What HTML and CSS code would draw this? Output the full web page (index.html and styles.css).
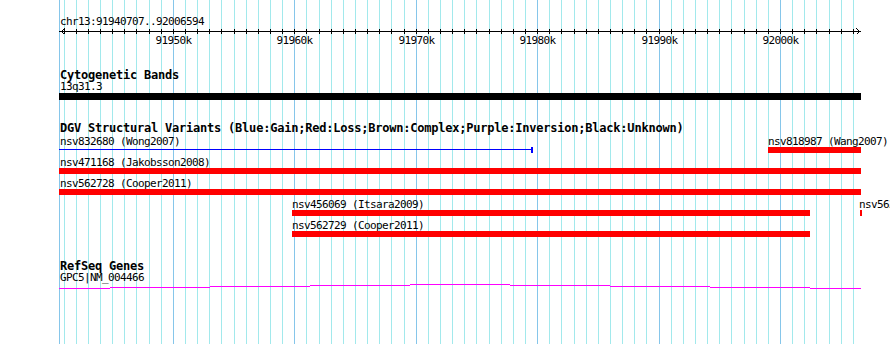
FILE: index.html
```html
<!DOCTYPE html>
<html lang="en">
<head>
  <meta charset="UTF-8">
  <meta name="viewport" content="width=device-width, initial-scale=1.0">
  <title>chr13:91940707..92006594</title>
  <link rel="stylesheet" href="styles.css">
</head>
<body>
  <div class="panel">
    <svg id="tracks" width="890" height="344" viewBox="0 0 890 344">
      <g id="grid"></g>

      <!-- ruler -->
      <g id="ruler">
        <text class="label" x="60" y="25">chr13:91940707..92006594</text>
        <rect class="ink" x="59" y="31" width="802" height="1"/>
        <polyline class="arrow" points="64.5,28.5 61.5,31.5 64.5,34.5"/>
        <polyline class="arrow" points="856.5,28.5 859.5,31.5 856.5,34.5"/>
        <g id="ticks"></g>
      </g>

      <!-- cytogenetic bands -->
      <g>
        <text class="title" x="60" y="79">Cytogenetic Bands</text>
        <text class="label" x="60" y="90">13q31.3</text>
        <rect class="band" x="59" y="93" width="802" height="7"/>
      </g>

      <!-- DGV -->
      <g>
        <text class="title" x="60" y="132">DGV Structural Variants (Blue:Gain;Red:Loss;Brown:Complex;Purple:Inversion;Black:Unknown)</text>

        <text class="label" x="60" y="145">nsv832680 (Wong2007)</text>
        <rect class="gain" x="59" y="149" width="474" height="1"/>
        <rect class="gain" x="531" y="147" width="2" height="6"/>

        <text class="label" x="768" y="145">nsv818987 (Wang2007)</text>
        <rect class="loss" x="768" y="147" width="93" height="6"/>

        <text class="label" x="60" y="166">nsv471168 (Jakobsson2008)</text>
        <rect class="loss" x="59" y="168" width="802" height="6"/>

        <text class="label" x="60" y="187">nsv562728 (Cooper2011)</text>
        <rect class="loss" x="59" y="189" width="802" height="6"/>

        <text class="label" x="292" y="208">nsv456069 (Itsara2009)</text>
        <rect class="loss" x="292" y="210" width="518" height="6"/>

        <text class="label" x="859" y="208">nsv562730 (Cooper2011)</text>
        <rect class="loss" x="860" y="210" width="2" height="6"/>

        <text class="label" x="292" y="229">nsv562729 (Cooper2011)</text>
        <rect class="loss" x="292" y="231" width="518" height="6"/>
      </g>

      <!-- refseq -->
      <g>
        <text class="title" x="60" y="270">RefSeq Genes</text>
        <text class="label" x="60" y="281">GPC5|NM_004466</text>
        <g class="intron">
          <rect x="59" y="288" width="51" height="1"/>
          <rect x="110" y="287" width="100" height="1"/>
          <rect x="210" y="286" width="100" height="1"/>
          <rect x="310" y="285" width="100" height="1"/>
          <rect x="410" y="284" width="100" height="1"/>
          <rect x="510" y="285" width="100" height="1"/>
          <rect x="610" y="286" width="100" height="1"/>
          <rect x="710" y="287" width="100" height="1"/>
          <rect x="810" y="288" width="51" height="1"/>
        </g>
      </g>
    </svg>
  </div>

  <script>
    const start = 91940707;
    const end = 92006594;
    const ns = "http://www.w3.org/2000/svg";

    function toPixel(bp) {
      return Math.round(60 + (bp - start) * 800 / (end - start));
    }

    function addRect(parent, cls, x, y, w, h) {
      const r = document.createElementNS(ns, "rect");
      r.setAttribute("class", cls);
      r.setAttribute("x", x);
      r.setAttribute("y", y);
      r.setAttribute("width", w);
      r.setAttribute("height", h);
      parent.appendChild(r);
    }

    const grid = document.getElementById("grid");
    const ticks = document.getElementById("ticks");

    addRect(grid, "major", 59, 0, 1, 344);

    for (let bp = 91941000; bp < end; bp += 1000) {
      const x = toPixel(bp);
      const major = bp % 10000 === 0;
      addRect(grid, major ? "major" : "minor", x, 0, 1, 344);
      addRect(ticks, "ink", x, 29, 1, 5);

      if (major) {
        const t = document.createElementNS(ns, "text");
        t.setAttribute("class", "label scale");
        t.setAttribute("x", x + 0.5);
        t.setAttribute("y", 44);
        t.textContent = (bp / 1000) + "k";
        ticks.appendChild(t);
      }
    }
  </script>
</body>
</html>
```

FILE: styles.css
```css
body {
  margin: 0;
  background: #fff;
}
.panel {
  width: 890px;
  height: 344px;
  overflow: hidden;
  background: #fff;
}
.panel svg {
  display: block;
  shape-rendering: crispEdges;
}
.minor {
  fill: #a2e9ec;
}
.major {
  fill: #86c6ea;
}
.ink, .band {
  fill: #000;
}
.arrow {
  fill: none;
  stroke: #000;
  stroke-width: 1;
}
.label {
  font-family: "DejaVu Sans Mono", monospace;
  font-size: 11px;
  letter-spacing: -0.62px;
  fill: #000;
}
.title {
  font-family: "DejaVu Sans Mono", monospace;
  font-size: 12px;
  font-weight: bold;
  letter-spacing: -0.22px;
  fill: #000;
}
.scale {
  text-anchor: middle;
}
.gain {
  fill: #0000ff;
}
.loss {
  fill: #ff0000;
}
.intron rect {
  fill: #ff00ff;
}
```
